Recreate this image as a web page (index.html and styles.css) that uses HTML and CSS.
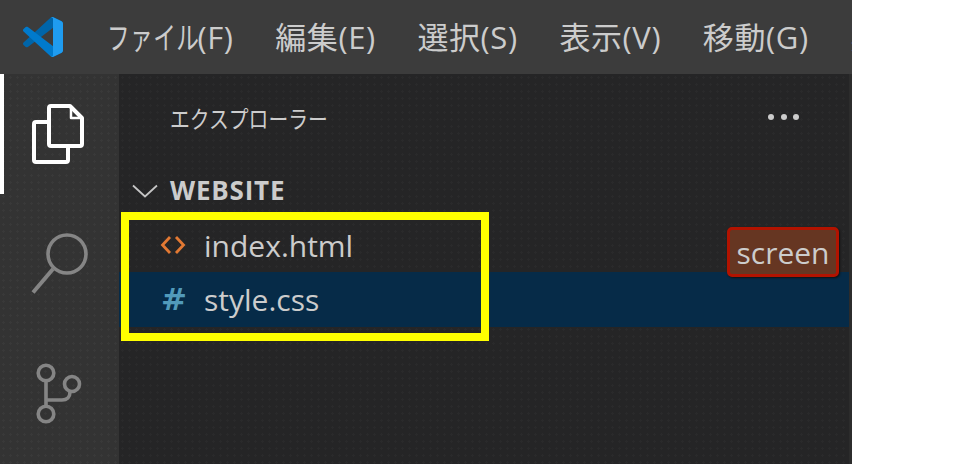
FILE: index.html
```html
<!DOCTYPE html>
<html lang="ja">
<head>
    <meta charset="UTF-8">
    <title>エクスプローラー</title>
    <link rel="stylesheet" href="styles.css">
</head>
<body>
    <div class="window">
        <header class="titlebar">
            <svg class="logo" viewBox="0 0 100 100">
                <path fill="#0065a9" d="M96.46 10.8L75.86.88C73.47-.27 70.62.21 68.75 2.08L1.3 63.58c-1.81 1.66-1.81 4.51 0 6.16l5.51 5.01c1.49 1.35 3.72 1.45 5.32.24L93.36 13.37C96.09 11.3 100 13.25 100 16.67v-.24c0-2.4-1.38-4.59-3.54-5.63z"/>
                <path fill="#007acc" d="M96.46 89.2l-20.6 9.92c-2.39 1.15-5.24.67-7.11-1.2L1.3 36.42c-1.81-1.66-1.81-4.51 0-6.17l5.51-5c1.49-1.35 3.72-1.45 5.32-.24l81.23 61.62c2.73 2.07 6.64.12 6.64-3.3v.24c0 2.4-1.38 4.59-3.54 5.63z"/>
                <path fill="#1f9cf0" d="M75.86 99.13c-2.39 1.15-5.24.66-7.11-1.21 2.31 2.31 6.25.67 6.25-2.59V4.67c0-3.26-3.94-4.89-6.25-2.59C70.62.21 73.47-.27 75.86.87l20.6 9.91c2.16 1.04 3.54 3.23 3.54 5.63v67.18c0 2.4-1.38 4.59-3.54 5.63z"/>
            </svg>
            <nav class="menu">
                <span class="menu-item"><span class="kana">ファイル</span>(F)</span>
                <span class="menu-item">編集(E)</span>
                <span class="menu-item">選択(S)</span>
                <span class="menu-item">表示(V)</span>
                <span class="menu-item">移動(G)</span>
                <span class="menu-item">実行(R)</span>
            </nav>
        </header>
        <div class="workbench">
            <aside class="activity">
                <div class="activity-item active">
                    <svg class="icon-files" viewBox="0 0 52 60" fill="none" stroke="#fff" stroke-width="4" stroke-linejoin="round">
                        <path d="M19 2H38L50 14V40a2 2 0 0 1-2 2H19a2 2 0 0 1-2-2V4a2 2 0 0 1 2-2z"/>
                        <path d="M39 4V14H49" stroke-width="2.5"/>
                        <path d="M17 18H4a2 2 0 0 0-2 2V56a2 2 0 0 0 2 2H34a2 2 0 0 0 2-2V42"/>
                    </svg>
                </div>
                <div class="activity-item">
                    <svg class="icon-search" viewBox="0 0 58 62" fill="none" stroke="#858585" stroke-width="3.6">
                        <circle cx="36" cy="21" r="19"/>
                        <path d="M22 36L2 59.5" stroke-width="4"/>
                    </svg>
                </div>
                <div class="activity-item">
                    <svg class="icon-git" viewBox="0 0 48 62" fill="none" stroke="#858585" stroke-width="3.6">
                        <circle cx="10" cy="10" r="7.8"/>
                        <circle cx="10" cy="51" r="7.8"/>
                        <circle cx="36" cy="21" r="7.5"/>
                        <path d="M10 18V43M10 37H26C31 37 34 34 34 29"/>
                    </svg>
                </div>
            </aside>
            <section class="sidebar">
                <div class="sidebar-title">
                    <span class="title-text">エクスプローラー</span>
                    <span class="more"><i></i><i></i><i></i></span>
                </div>
                <div class="folder">
                    <svg class="chevron" viewBox="0 0 26 14" fill="none" stroke="#c5c5c5" stroke-width="1.8">
                        <path d="M1 1.5l12 11 12-11"/>
                    </svg>
                    <span>WEBSITE</span>
                </div>
                <div class="file">
                    <svg class="file-icon" viewBox="0 0 26 20" fill="none" stroke="#e37933" stroke-width="2.8">
                        <path d="M10 2L2.500 10l7.500 8M16 2l7.500 8-7.500 8"/>
                    </svg>
                    <span>index.html</span>
                </div>
                <div class="file selected">
                    <span class="hash">#</span>
                    <span>style.css</span>
                </div>
                <div class="badge">screen</div>
                <div class="highlight"></div>
            </section>
        </div>
    </div>
</body>
</html>
```

FILE: styles.css
```css
body {
    margin: 0;
    background: #fff;
    font-family: "Open Sans", "Noto Sans CJK JP", sans-serif;
    color: #ccc;
    overflow: hidden;
}

.window {
    width: 852px;
    height: 464px;
    display: flex;
    flex-direction: column;
    overflow: hidden;
}

.titlebar {
    height: 74px;
    flex: none;
    background: #3c3c3c;
    display: flex;
    align-items: center;
    padding-left: 23px;
    box-sizing: border-box;
}

.logo {
    width: 40px;
    height: 40px;
    flex: none;
}

.menu {
    display: flex;
    gap: 41.7px;
    margin-left: 44px;
    margin-bottom: 4px;
    font-size: 31px;
    letter-spacing: 0.6px;
    white-space: nowrap;
}

/* the kana in the original font are much narrower than the kanji */
.kana {
    display: inline-block;
    transform: scaleX(0.73);
    transform-origin: left;
    margin-right: -36px;
}

.workbench {
    flex: 1;
    display: flex;
    min-height: 0;
}

.activity {
    width: 119px;
    flex: none;
    display: flex;
    flex-direction: column;
    gap: 10px;
    background-color: #333;
    background-image: radial-gradient(circle, rgba(255, 255, 255, 0.03) 1px, transparent 1.2px);
    background-size: 7px 7px;
}

.activity-item {
    height: 120px;
    flex: none;
    display: flex;
    align-items: center;
    justify-content: center;
    box-sizing: border-box;
}

.activity-item.active {
    border-left: 4px solid #fff;
    padding-right: 4px;
}

.icon-files {
    width: 52px;
    height: 60px;
    margin-left: -3px;
}

.icon-search {
    width: 58px;
    height: 62px;
}

.icon-git {
    width: 48px;
    height: 62px;
}

.sidebar {
    flex: 1;
    position: relative;
    background-color: #252526;
    background-image: radial-gradient(circle, rgba(255, 255, 255, 0.025) 1px, transparent 1.2px);
    background-size: 7px 7px;
    border-right: 3px solid #2c2c2c;
}

.sidebar-title {
    height: 90px;
    display: flex;
    align-items: center;
    justify-content: space-between;
    padding: 0 50px 0 51px;
}

.title-text {
    display: inline-block;
    font-size: 24px;
    transform: scaleX(0.825);
    transform-origin: left;
    margin-bottom: 4px;
}

.more {
    display: flex;
    gap: 6.5px;
    margin-bottom: 4px;
}

.more i {
    width: 6px;
    height: 6px;
    border-radius: 50%;
    background: #ccc;
}

.folder {
    height: 54px;
    display: flex;
    align-items: center;
    padding-left: 13px;
    font-size: 26px;
    font-weight: 700;
    letter-spacing: 0.8px;
}

.folder span {
    margin-bottom: 2px;
}

.chevron {
    width: 26px;
    height: 14px;
    margin-right: 12px;
}

.file {
    height: 54px;
    display: flex;
    align-items: center;
    padding-left: 85px;
    font-size: 30px;
}

.file.selected {
    height: 55px;
    background: #062b48;
}

.file-icon {
    position: absolute;
    left: 41px;
    width: 26px;
    height: 20px;
}

.hash {
    position: absolute;
    left: 42px;
    margin-bottom: 2px;
    color: #519aba;
    font-family: "DejaVu Sans", sans-serif;
    font-size: 31px;
    font-weight: 700;
}

.badge {
    position: absolute;
    left: 608px;
    top: 153px;
    width: 112px;
    height: 50px;
    box-sizing: border-box;
    display: flex;
    align-items: center;
    justify-content: center;
    background: #663622;
    border: 3px solid #b21300;
    border-radius: 5px;
    box-shadow: 1px 1px 2px #111;
    font-size: 30px;
}

.highlight {
    position: absolute;
    left: 2px;
    top: 138px;
    width: 368px;
    height: 129px;
    box-sizing: border-box;
    border: 8px solid #ff0;
}
```
